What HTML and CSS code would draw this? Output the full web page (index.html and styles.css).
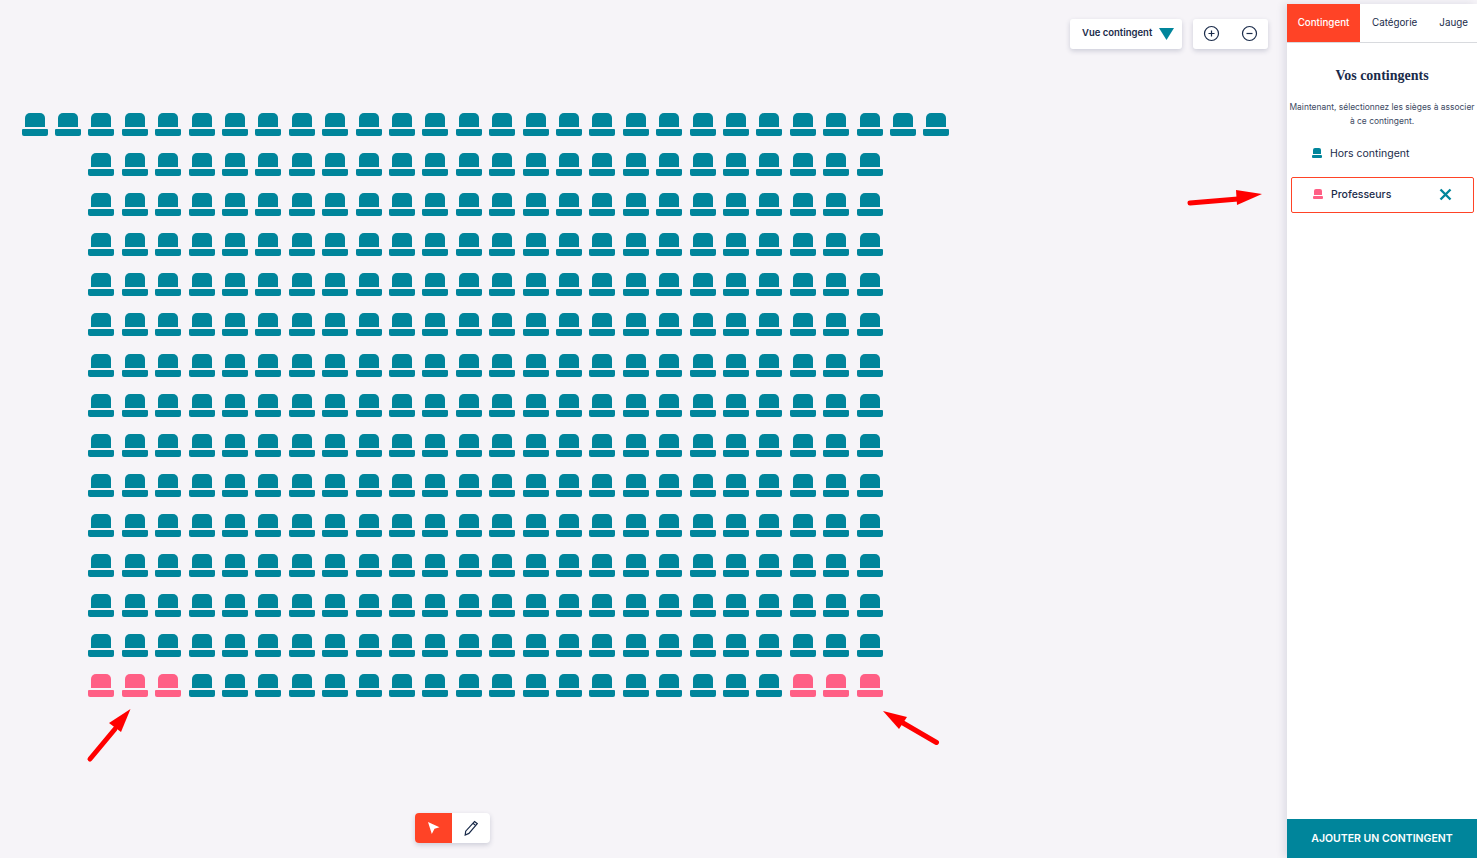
FILE: index.html
```html
<!DOCTYPE html>
<html lang="fr">
<head>
<meta charset="utf-8">
<title>Vos contingents</title>
<link rel="stylesheet" href="styles.css">
</head>
<body>
<main class="canvas">
  <div class="seatmap" id="seatmap"></div>

  <div class="top-tools">
    <div class="tool-card view-select">
      <span>Vue contingent</span>
      <svg class="caret" width="15" height="12" viewBox="0 0 15 12"><path d="M0 0H15L7.5 12Z"/></svg>
    </div>
    <div class="tool-card zoom-tools">
      <svg width="17" height="17" viewBox="0 0 17 17" class="round-icon"><circle cx="8.5" cy="8.5" r="7"/><path d="M5.5 8.5h6M8.5 5.5v6"/></svg>
      <svg width="17" height="17" viewBox="0 0 17 17" class="round-icon"><circle cx="8.5" cy="8.5" r="7"/><path d="M5.5 8.5h6"/></svg>
    </div>
  </div>

  <div class="mode-tools">
    <div class="mode mode-active">
      <svg width="14" height="14" viewBox="0 0 14 14"><path class="cursor" d="M1 1L12.5 6.2 7.5 7.8 4.8 13Z"/></svg>
    </div>
    <div class="mode mode-pencil">
      <svg width="16" height="16" viewBox="0 0 16 16"><path class="pencil" d="M11.5 1.5l2.8 2.2-8.4 9.7L2.2 15l.5-3.8ZM10 3.3l2.8 2.3"/></svg>
    </div>
  </div>

  <svg class="arrow arrow-left" width="50" height="60" viewBox="0 0 50 60"><path class="shaft" d="M4 54L29 24"/><path d="M44.5 4L23 18 35 27Z"/></svg>
  <svg class="arrow arrow-right" width="60" height="42" viewBox="0 0 60 42"><path class="shaft" d="M54.5 36.500L21 17"/><path d="M1 5L25 11 17 23Z"/></svg>
  <svg class="arrow arrow-panel" width="78" height="22" viewBox="0 0 78 22"><path class="shaft" d="M4 17L52 13"/><path d="M76 8L50 4 51 19Z"/></svg>
</main>

<aside class="panel">
  <nav class="tabs">
    <div class="tab tab-active">Contingent</div>
    <div class="tab tab-cat">Catégorie</div>
    <div class="tab tab-jauge">Jauge</div>
  </nav>
  <div class="panel-body">
    <h1>Vos contingents</h1>
    <p>Maintenant, sélectionnez les sièges à associer à ce contingent.</p>
    <div class="quota">
      <span class="seat seat-small"></span>
      <span>Hors contingent</span>
    </div>
    <div class="quota quota-selected">
      <span class="seat seat-small seat-pink"></span>
      <span class="quota-name">Professeurs</span>
      <svg class="close" width="13" height="13" viewBox="0 0 13 13"><path d="M1.5 1.5l10 10M11.5 1.5l-10 10"/></svg>
    </div>
  </div>
  <button class="add-btn">AJOUTER UN CONTINGENT</button>
</aside>
<script src="script.js"></script>
</body>
</html>
```
FILE: styles.css
```css
* { box-sizing: border-box; }
html, body { height: 100%; }
body {
  margin: 0;
  height: 858px;
  overflow: hidden;
  display: flex;
  background: #f6f4f8;
  color: #1a2b4a;
  font-family: Inter, "Liberation Sans", sans-serif;
}
.canvas {
  position: relative;
  flex: 1;
  padding: 113px 0 0 21px;
}
.seatmap {
  width: 929px;
  display: flex;
  flex-direction: column;
  align-items: center;
  row-gap: 16.1px;
}
.row { display: flex; column-gap: 7.42px; }
.seat {
  display: flex;
  flex-direction: column;
  align-items: center;
  width: 26px;
  height: 24px;
  row-gap: 2px;
}
.seat::before {
  content: "";
  width: 20px;
  height: 14px;
  background: #00859b;
  border-radius: 5px 5px 0 0;
}
.seat::after {
  content: "";
  width: 26px;
  height: 7px;
  background: #00859b;
  border-radius: 1px 1px 2px 2px;
}
.seat-pink::before, .seat-pink::after { background: #ff5f85; }
.seat-small { width: 10px; height: 10px; row-gap: 1px; }
.seat-small::before { width: 8px; height: 6px; border-radius: 2px 2px 0 0; }
.seat-small::after { width: 10px; height: 3px; border-radius: 1px; }

.top-tools {
  position: absolute;
  top: 19px;
  right: 19px;
  display: flex;
  column-gap: 11px;
}
.tool-card {
  height: 30px;
  background: #fff;
  border-radius: 3px;
  box-shadow: 0 2px 5px rgba(40, 50, 90, .2);
  display: flex;
  align-items: center;
}
.view-select {
  width: 112px;
  padding: 0 8px 3px 12px;
  justify-content: space-between;
  font-size: 9.5px;
  font-weight: 600;
}
.caret { fill: #00859b; margin-top: 3px; }
.zoom-tools {
  width: 75px;
  padding: 0 10px 2px;
  justify-content: space-between;
}
.round-icon { fill: none; stroke: #1a2b4a; stroke-width: 1.2; }

.mode-tools {
  position: absolute;
  left: 415px;
  top: 813px;
  display: flex;
  height: 30px;
  border-radius: 4px;
  overflow: hidden;
  background: #fff;
  box-shadow: 0 2px 5px rgba(40, 50, 90, .2);
}
.mode { width: 37px; display: flex; align-items: center; justify-content: center; }
.mode-pencil { width: 38px; }
.mode-active { background: #ff4326; }
.cursor { fill: #fff; }
.pencil { fill: none; stroke: #1a2b4a; stroke-width: 1.2; }

.arrow { position: absolute; fill: #ff0000; }
.shaft { stroke: #ff0000; stroke-width: 5; stroke-linecap: round; fill: none; }
.arrow-left { left: 86px; top: 705px; }
.arrow-right { left: 882px; top: 706px; }
.arrow-panel { left: 1186px; top: 186px; }

.panel {
  width: 190px;
  margin-top: 4px;
  background: #fff;
  display: flex;
  flex-direction: column;
  box-shadow: -3px 0 8px rgba(40, 50, 90, .12);
  position: relative;
}
.tabs {
  display: flex;
  height: 39px;
  border-bottom: 1px solid #d8dade;
  font-size: 9.8px;
}
.tab { height: 36px; display: flex; align-items: center; }
.tab-active { width: 73px; height: 38px; padding-bottom: 2px; justify-content: center; background: #ff4326; color: #fff; font-weight: 500; }
.tab-cat { margin-left: 12px; }
.tab-jauge { margin-left: 22px; }
.panel-body { flex: 1; display: flex; flex-direction: column; align-items: center; }
h1 {
  margin: 24px 0 0;
  font: bold 14px/17px "Liberation Serif", serif;
}
p {
  margin: 16px 0 0;
  width: 190px;
  text-align: center;
  font-size: 8.45px;
  line-height: 14px;
  color: #3d4a63;
}
.quota {
  align-self: stretch;
  display: flex;
  align-items: center;
  font-size: 10.5px;
  column-gap: 8px;
  height: 20px;
  margin-top: 15px;
  padding-left: 25px;
}
.quota-selected {
  margin: 14px 3px 0 4px;
  height: 36px;
  border: 1px solid #ff4326;
  border-radius: 2px;
  padding: 0 21px 2px 21px;
  font-size: 10.5px;
  font-weight: 500;
}
.quota-name { flex: 1; }
.close { fill: none; stroke: #00859b; stroke-width: 2.4; }
.add-btn {
  height: 39px;
  border: 0;
  background: #00859b;
  color: #fff;
  font: 600 10.5px Inter, "Liberation Sans", sans-serif;
}
```
FILE: script.js
```js
var map = document.getElementById('seatmap');
var PINK = [0, 1, 2, 21, 22, 23];
function row(count, pink) {
  var el = document.createElement('div');
  el.className = 'row';
  for (var i = 0; i < count; i++) {
    var s = document.createElement('span');
    s.className = 'seat' + (pink && pink.indexOf(i) >= 0 ? ' seat-pink' : '');
    el.appendChild(s);
  }
  map.appendChild(el);
}
row(28);
for (var r = 0; r < 13; r++) row(24);
row(24, PINK);
```
